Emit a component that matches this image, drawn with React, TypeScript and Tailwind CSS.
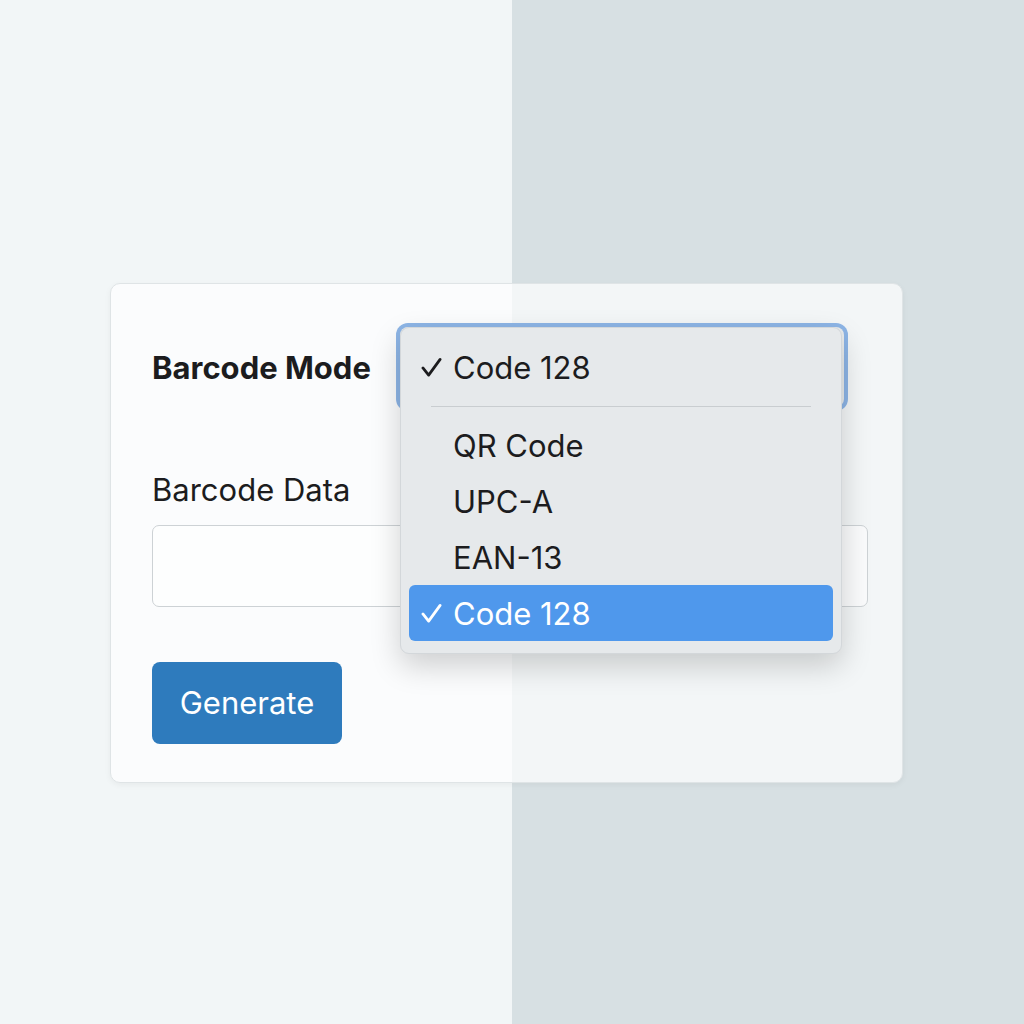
import type { ReactNode } from "react"

const font = { fontFamily: "Inter, 'Noto Sans', 'Liberation Sans', sans-serif" }

function Check({ className }: { className?: string }) {
  return (
    <svg viewBox="0 0 22 22" className={className} fill="none" stroke="currentColor" strokeWidth="2.9" strokeLinecap="round" strokeLinejoin="round">
      <path d="M2 11.5 L8 19 L20 2.5" />
    </svg>
  )
}

function Option({ children, selected, checked }: { children: ReactNode; selected?: boolean; checked?: boolean }) {
  return (
    <div
      className={[
        "mx-2 flex h-[56px] items-center rounded-[6px] pl-3",
        selected ? "bg-[#4f98ec] text-white" : "text-[#1c1c1e]",
      ].join(" ")}
    >
      <span className="flex w-[32px] items-center">{checked ? <Check className="h-[21px] w-[21px]" /> : null}</span>
      <span className="text-[31px] leading-none">{children}</span>
    </div>
  )
}

export default function App() {
  const options = ["QR Code", "UPC-A", "EAN-13"]

  return (
    <div
      className="min-h-[1024px] w-full bg-[linear-gradient(to_right,#f2f6f7_50%,#d7e0e3_50%)] pl-[110px] pt-[283px]"
      style={font}
    >
      <div className="w-[793px] rounded-[10px] border border-[#dfe4e6] bg-white/70 pb-[38px] pl-[41px] pr-[34px] pt-[43px] shadow-[0_2px_6px_rgba(0,0,0,0.05)]">
        {/* mode row */}
        <div className="flex items-center">
          <div className="w-[248px] text-[31px] font-bold leading-none text-[#1c1c1e]">Barcode Mode</div>
          <div className="relative">
            <div className="h-[80px] w-[444px] rounded-[8px] bg-[#e9eced] ring-4 ring-[#8db5e6]" />

            {/* open menu */}
            <div className="absolute left-0 top-0 z-10 w-[442px] rounded-[9px] border border-[#d3d7da] bg-[#e6e9eb] pb-[12px] shadow-[0_12px_30px_rgba(0,0,0,0.18)]">
              <div className="flex h-[78px] items-center pl-5 text-[#1c1c1e]">
                <span className="flex w-[32px] items-center">
                  <Check className="h-[21px] w-[21px]" />
                </span>
                <span className="text-[31px] leading-none">Code 128</span>
              </div>
              <div className="mx-[30px] mb-[10px] h-px bg-[#c9cdd0]" />
              {options.map((o) => (
                <Option key={o}>{o}</Option>
              ))}
              <Option selected checked>
                Code 128
              </Option>
            </div>
          </div>
        </div>

        <div className="mt-[66px] text-[31px] leading-[34px] text-[#1c1c1e]">Barcode Data</div>
        <div className="mt-[18px] h-[82px] w-full rounded-[7px] border border-[#cdd2d5] bg-white/60" />

        <button
          type="button"
          className="mt-[55px] flex h-[82px] w-[190px] items-center justify-center rounded-[8px] bg-[#2e7bbd] text-[31px] text-white"
        >
          Generate
        </button>
      </div>
    </div>
  )
}
